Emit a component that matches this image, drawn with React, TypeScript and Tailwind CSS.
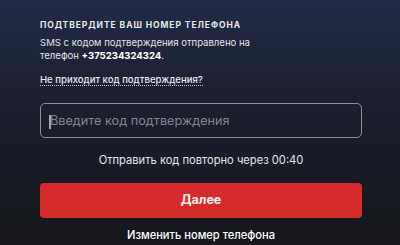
import React from "react";

export default function App() {
  return (
    <div className="w-[400px] h-[245px] overflow-hidden bg-gradient-to-b from-[#202b46] via-[#1a1e2c] to-[#16171b] font-['Inter','Noto_Sans',sans-serif]">
      <div className="w-[322px] ml-[40px] pt-[19px] flex flex-col">
        <div className="text-[8.5px] leading-[12px] font-bold tracking-[0.93px] text-[#e6e8ee] whitespace-nowrap">
          ПОДТВЕРДИТЕ ВАШ НОМЕР ТЕЛЕФОНА
        </div>
        <p className="mt-[5px] text-[9.55px] leading-[13px] text-[#e1e4ea] whitespace-nowrap">
          SMS с кодом подтверждения отправлено на
          <br />
          телефон <span className="font-bold text-white">+375234324324</span>.
        </p>
        <div className="mt-[9px] leading-[13px]">
          <span className="text-[9.57px] leading-[13px] font-medium text-[#e8eaef] border-b border-dotted border-[#c5c9d1] whitespace-nowrap">
            Не приходит код подтверждения?
          </span>
        </div>
        <div className="relative mt-[17px] h-[35px] rounded-[5px] border border-[#8c9099] flex items-center pl-[9px]">
          <span className="absolute left-[8px] top-[11px] w-[2px] h-[14px] bg-[#a3a8b2]" />
          <span className="text-[12.7px] text-[#80858f] whitespace-nowrap">Введите код подтверждения</span>
        </div>
        <div className="mt-[14px] text-center text-[11.15px] leading-[16px] text-[#e4e5e8] whitespace-nowrap">
          Отправить код повторно через 00:40
        </div>
        <button className="mt-[15px] h-[35px] w-full rounded-[4px] bg-[#d52b2b] text-[12.5px] font-bold text-[#f4eeee] flex items-center justify-center">
          Далее
        </button>
        <div className="mt-[9px] text-center text-[11.1px] leading-[16px] font-medium text-white whitespace-nowrap">
          Изменить номер телефона
        </div>
      </div>
    </div>
  );
}
